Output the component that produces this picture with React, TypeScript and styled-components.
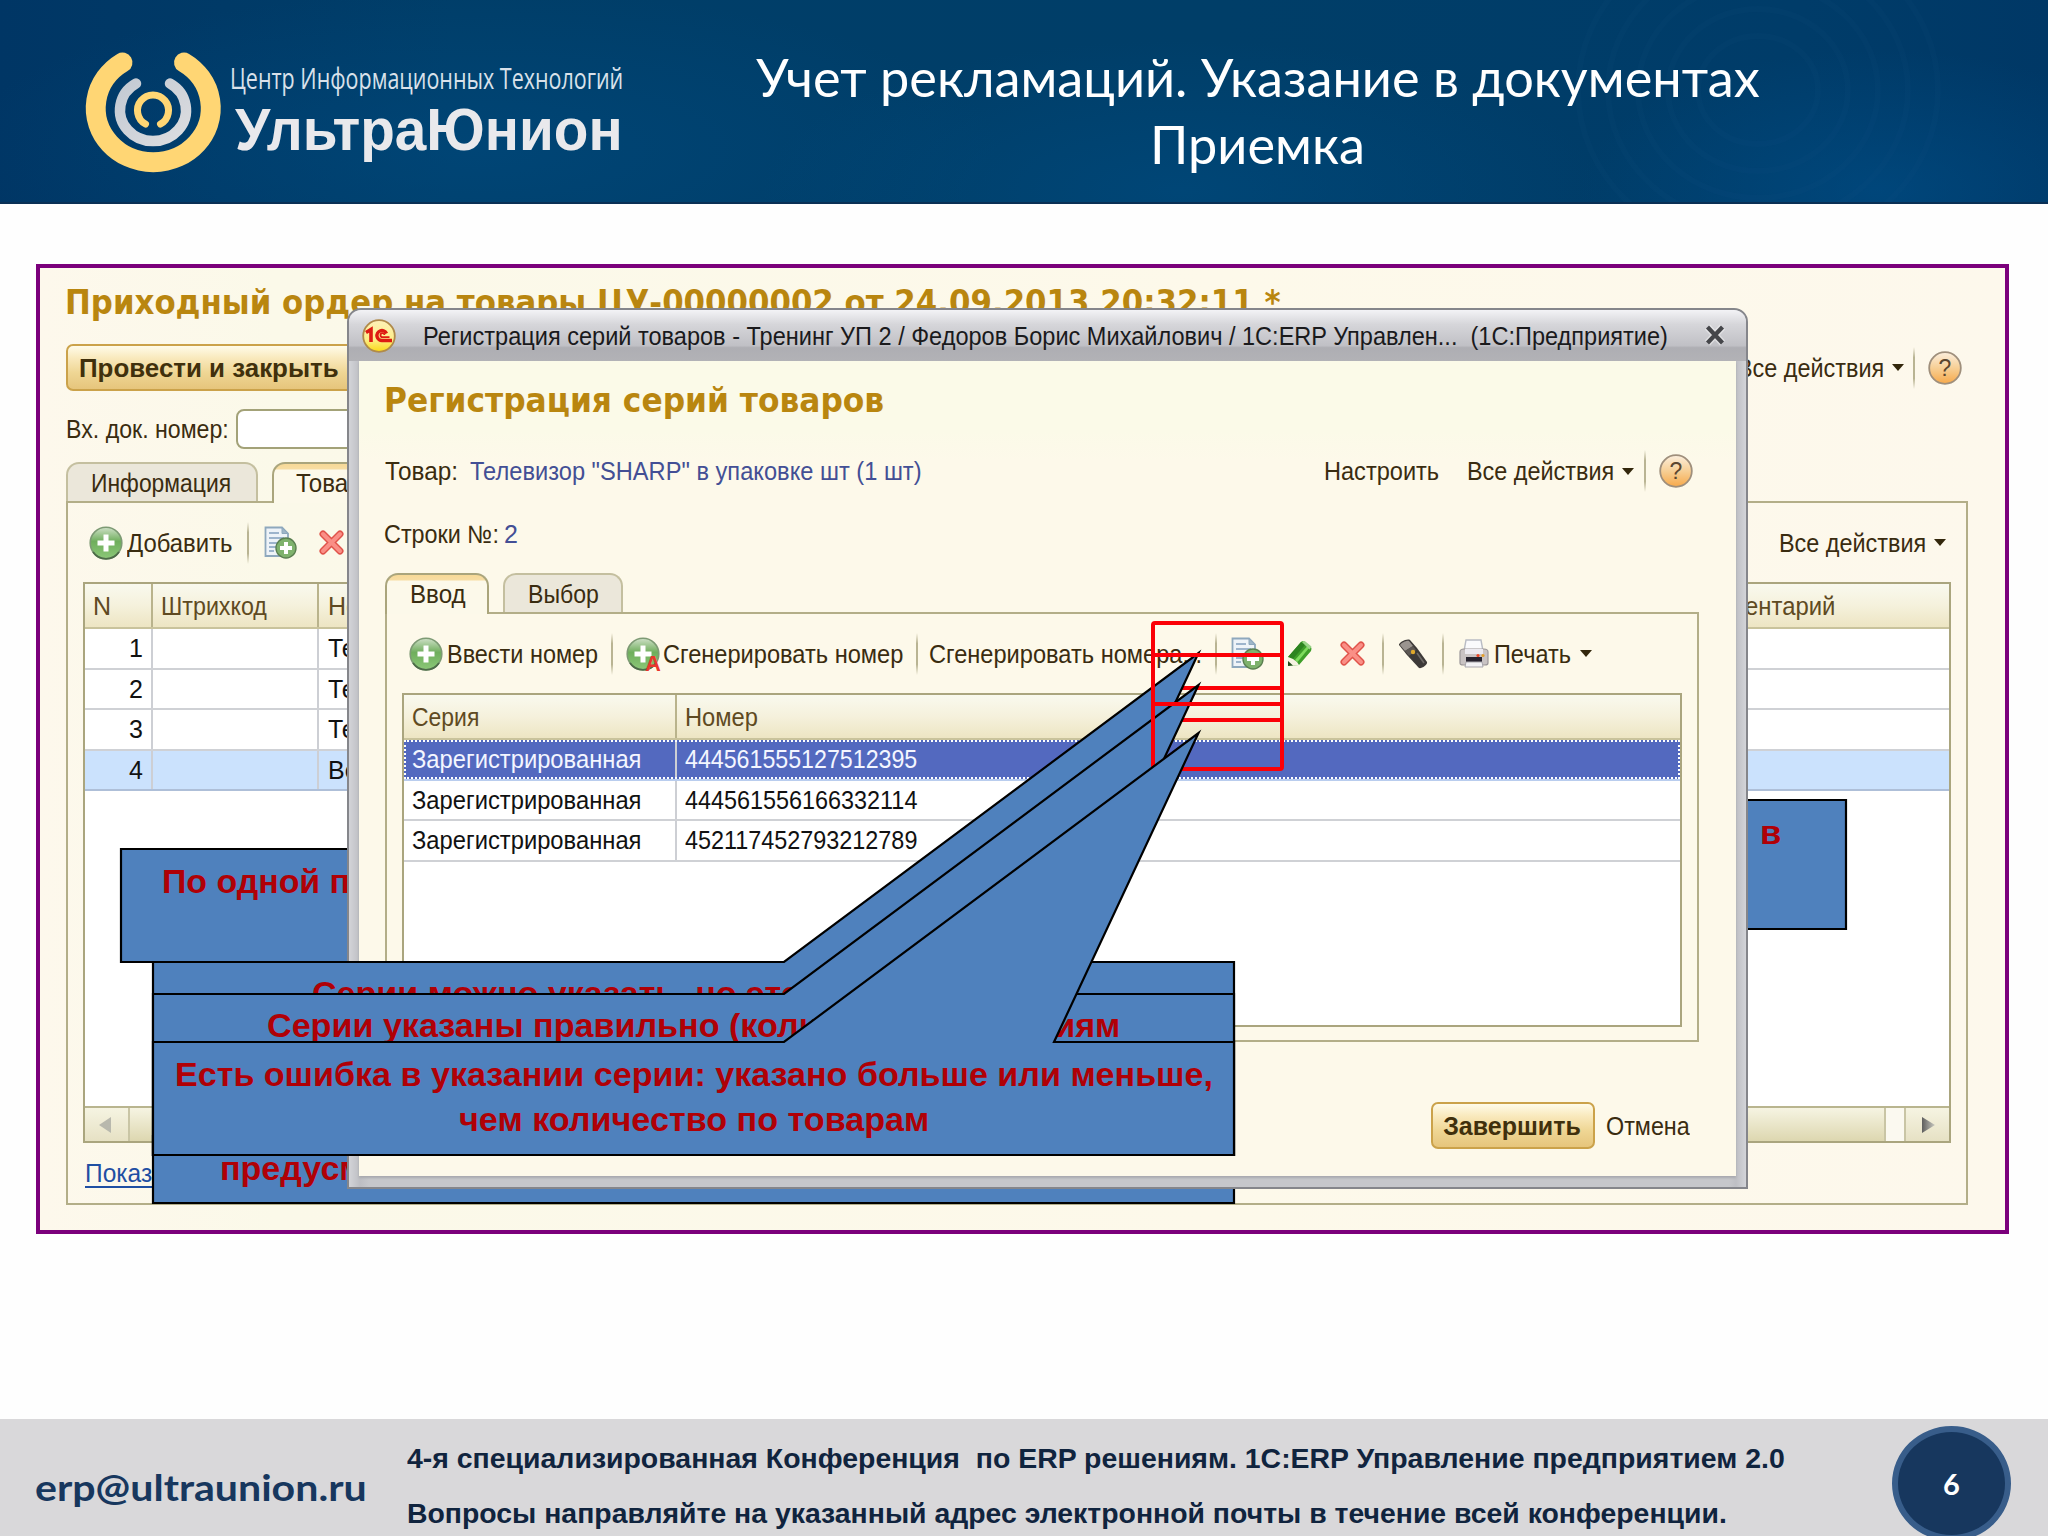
import React, { useLayoutEffect, useRef, useState } from "react";
import styled, { createGlobalStyle, css } from "styled-components";

const GlobalStyle = createGlobalStyle`
  *, *::before, *::after { box-sizing: border-box; }
  body { margin: 0; background: #fefefe; }
`;

const ui = `"Liberation Sans", Arial, sans-serif`;
const heading = `"DejaVu Sans", Verdana, sans-serif`;
const humanist = `Lato, "Open Sans", sans-serif`;

/* ---------- text that is condensed or widened to a given width ---------- */

type TextProps = {
  $size?: number;
  $color?: string;
  $bold?: boolean;
  $font?: string;
  $underline?: boolean;
};

const TextBox = styled.span<{ $ml?: number }>`
  display: block;
  flex: none;
  white-space: pre;
  margin-left: ${(p) => p.$ml ?? 0}px;
`;

const TextInk = styled.span<TextProps>`
  display: inline-block;
  vertical-align: top;
  transform-origin: left center;
  font-family: ${(p) => p.$font ?? ui};
  font-size: ${(p) => p.$size ?? 25}px;
  font-weight: ${(p) => (p.$bold ? 700 : 400)};
  line-height: 1.36;
  color: ${(p) => p.$color ?? "#3a2c10"};
  text-decoration: ${(p) => (p.$underline ? "underline" : "none")};
  text-decoration-thickness: 2px;
  text-underline-offset: 4px;
`;

function Label({ w, ml, children, ...ink }: TextProps & { w?: number; ml?: number; children: string }) {
  const ref = useRef<HTMLSpanElement>(null);
  const [scale, setScale] = useState(1);
  useLayoutEffect(() => {
    if (w && ref.current) setScale(w / ref.current.offsetWidth);
  }, [w, children]);
  return (
    <TextBox $ml={ml} style={w ? { width: w } : undefined}>
      <TextInk ref={ref} {...ink} style={w ? { transform: `scaleX(${scale})` } : undefined}>
        {children}
      </TextInk>
    </TextBox>
  );
}

/* ---------- slide ---------- */

const Slide = styled.div`
  position: relative;
  display: flex;
  flex-direction: column;
  width: 2048px;
  height: 1536px;
  overflow: hidden;
  background: #fefefe;
`;

const Header = styled.header`
  position: relative;
  display: flex;
  height: 204px;
  flex: none;
  border-bottom: 2px solid #0a3055;
  background:
    radial-gradient(ellipse 420px 150px at 1180px 190px, rgba(0, 82, 140, 0.4), transparent),
    radial-gradient(ellipse 520px 160px at 480px 150px, rgba(0, 76, 130, 0.5), transparent),
    radial-gradient(ellipse 300px 140px at 1880px 190px, rgba(0, 84, 145, 0.45), transparent),
    linear-gradient(90deg, #003665 0%, #003e69 22%, #003e68 60%, #003c69 88%, #003866 100%);
`;

const Ripples = styled.svg`
  position: absolute;
  right: 0;
  top: 0;
`;

const Logo = styled.div`
  display: flex;
  padding: 44px 0 0 80px;
  width: 700px;
`;

const LogoText = styled.div`
  display: flex;
  flex-direction: column;
  padding-left: 2px;
`;

const LogoTop = styled.div`
  height: 46px;
  padding-top: 14px;
`;

const LogoName = styled.div`
  margin-top: -1px;
`;

const SlideTitle = styled.div`
  display: flex;
  flex-direction: column;
  align-items: center;
  width: 1115px;
  padding-top: 41px;
`;

const TitleLine = styled.div`
  height: 67px;
`;

const Stage = styled.main`
  flex: 1;
  padding: 60px 39px 0 36px;
`;

const Frame = styled.section`
  isolation: isolate;
  height: 970px;
  border: 4px solid #7b007b;
  background: linear-gradient(90deg, #fdf8ec 0%, #fbf9e9 12%, #fdf9ea 60%, #fdf8ec 100%);
`;

const Row = styled.div<{ $h: number; $mt?: number; $pl?: number; $pr?: number; $end?: boolean }>`
  display: flex;
  align-items: center;
  justify-content: ${(p) => (p.$end ? "flex-end" : "flex-start")};
  height: ${(p) => p.$h}px;
  margin-top: ${(p) => p.$mt ?? 0}px;
  padding-left: ${(p) => p.$pl ?? 0}px;
  padding-right: ${(p) => p.$pr ?? 0}px;
`;

const Push = styled.div`
  flex: 1;
`;

const GoldButton = styled.button<{ $w: number; $pl: number }>`
  display: flex;
  align-items: center;
  flex: none;
  width: ${(p) => p.$w}px;
  height: 47px;
  padding: 0 0 0 ${(p) => p.$pl}px;
  border: 2px solid #cba24a;
  border-radius: 7px;
  background: linear-gradient(#fffbe9 0%, #f9e9bd 28%, #efd694 62%, #e6c57c 100%);
`;

const Field = styled.div`
  width: 300px;
  height: 40px;
  margin-left: 7px;
  border: 2px solid #a3a278;
  border-radius: 8px;
  background: #fff;
`;

const Divider = styled.i<{ $ml: number }>`
  flex: none;
  width: 2px;
  height: 42px;
  margin-left: ${(p) => p.$ml}px;
  background: linear-gradient(transparent, #b9b493 25%, #b9b493 75%, transparent);
`;

const Caret = styled.i<{ $ml: number }>`
  flex: none;
  margin-left: ${(p) => p.$ml}px;
  border: 6px solid transparent;
  border-top: 7px solid #33270c;
  border-bottom: 0;
`;

const Tabs = styled.div<{ $mt: number }>`
  display: flex;
  gap: 14px;
  height: 39px;
  margin-top: ${(p) => p.$mt}px;
  padding-left: 26px;
`;

const Tab = styled.div<{ $w: number; $active?: boolean; $pl: number }>`
  position: relative;
  display: flex;
  align-items: center;
  width: ${(p) => p.$w}px;
  height: 39px;
  padding: 1px 0 0 ${(p) => p.$pl}px;
  border: 2px solid #c4bf9f;
  border-bottom: 0;
  border-radius: 13px 13px 0 0;
  background: #ebe7da;
  ${(p) =>
    p.$active &&
    css`
      z-index: 1;
      height: 41px;
      padding-bottom: 2px;
      border-color: #aaa57c;
      background: linear-gradient(#f7d997 0, #f7dda3 5px, #fcf9ea 6px);
    `}
`;

const Panel = styled.div<{ $h: number; $mr: number }>`
  height: ${(p) => p.$h}px;
  margin: 0 ${(p) => p.$mr}px 0 26px;
  border: 2px solid #b3ae88;
`;

const Table = styled.div<{ $w: number; $h: number; $ml: number }>`
  display: flex;
  flex-direction: column;
  width: ${(p) => p.$w}px;
  height: ${(p) => p.$h}px;
  margin-left: ${(p) => p.$ml}px;
  border: 2px solid #aaa57e;
  background: #fff;
`;

const THead = styled.div<{ $h: number }>`
  display: flex;
  flex: none;
  height: ${(p) => p.$h}px;
  border-bottom: 2px solid #c9c39c;
  background: linear-gradient(#f9f9ee 0%, #f5f1dc 50%, #ede5c3 100%);
`;

const Cell = styled.div<{ $w?: number; $pl?: number; $head?: boolean; $right?: boolean }>`
  display: flex;
  align-items: center;
  justify-content: ${(p) => (p.$right ? "flex-end" : "flex-start")};
  flex: ${(p) => (p.$w ? "none" : "1")};
  width: ${(p) => (p.$w ? `${p.$w}px` : "auto")};
  padding-left: ${(p) => p.$pl ?? 8}px;
  padding-right: ${(p) => (p.$right ? 8 : 0)}px;
  border-right: ${(p) => (p.$w ? (p.$head ? "2px solid #b9b38c" : "2px solid #cdcfd4") : "0")};
`;

const TRow = styled.div<{ $h: number; $tone?: "soft" | "strong" }>`
  position: relative;
  display: flex;
  flex: none;
  height: ${(p) => p.$h}px;
  border-bottom: 2px solid #cfd1d5;
  ${(p) => p.$tone === "soft" && css`background: #cbe2fd; border-color: #aebfd8;`}
  ${(p) => p.$tone === "strong" && css`background: #5369bf; border-color: #b9cdee;`}
`;

const FocusRing = styled.i`
  position: absolute;
  inset: 0;
  border: 2px dotted #fff;
`;

const ScrollBar = styled.div`
  display: flex;
  flex: none;
  height: 35px;
  margin-top: auto;
  border-top: 2px solid #b9b58f;
  background: #fbf9f0;
`;

const ScrollPart = styled.div<{ $w: number; $tone?: boolean; $left?: boolean }>`
  display: flex;
  align-items: center;
  justify-content: center;
  width: ${(p) => p.$w}px;
  border-right: ${(p) => (p.$left ? 0 : 2)}px solid #c9c5a5;
  border-left: ${(p) => (p.$left ? 2 : 0)}px solid #c9c5a5;
  background: linear-gradient(#f6f4e2, ${(p) => (p.$tone ? "#ddd7b0" : "#e6e1c4")});
`;

/* ---------- dialog ---------- */

const Dialog = styled.section`
  position: absolute;
  left: 347px;
  top: 308px;
  display: flex;
  flex-direction: column;
  width: 1401px;
  height: 881px;
  padding: 0 10px 11px;
  border: 2px solid #85868b;
  border-radius: 14px 14px 0 0;
  background: linear-gradient(90deg, #d3d4d8 0, #bdbec3 11px, #c6c7cb 20px, #c6c7cb 1380px, #bebfc4 1387px, #d3d4d8 100%);
`;

const DialogBar = styled.div`
  display: flex;
  align-items: center;
  flex: none;
  height: 51px;
  margin: 0 -10px;
  padding: 1px 0 0 13px;
  border-radius: 12px 12px 0 0;
  background: linear-gradient(#f3f3f6 0%, #d6d6da 28%, #c0c0c5 70%, #aeaeb3 74%, #b2b2b6 100%);
`;

const DialogBody = styled.div`
  isolation: isolate;
  flex: 1;
  background: linear-gradient(#fbfae8 0%, #fbfae8 70px, #fdf9ea 100px, #fdf9ea 100%);
  box-shadow: 0 2px 2px #a9aaaf;
`;

/* ---------- callouts and markers lying over the windows ---------- */

const CalloutBox = styled.div<{ $x: number; $y: number; $w: number; $h: number }>`
  position: absolute;
  left: ${(p) => p.$x}px;
  top: ${(p) => p.$y}px;
  display: flex;
  flex-direction: column;
  align-items: center;
  width: ${(p) => p.$w}px;
  height: ${(p) => p.$h}px;
  padding-top: 10.6px;
`;

const CalloutShape = styled.svg`
  position: absolute;
  left: 0;
  top: 0;
  overflow: visible;
`;

const CalloutLine = styled.div<{ $start?: number }>`
  position: relative;
  height: 45px;
  ${(p) => p.$start !== undefined && css`align-self: flex-start; margin-left: ${p.$start}px;`}
`;

const Marker = styled.div<{ $y: number }>`
  position: absolute;
  left: 1151px;
  top: ${(p) => p.$y}px;
  width: 133px;
  height: 69px;
  border: 4px solid #fb0007;
  border-radius: 4px;
`;

type Line = { text: string; w: number; start?: number };

function Callout(p: { x: number; y: number; w: number; h: number; tail?: boolean; lines: Line[] }) {
  const top = p.tail ? `H631 L1045.5 -309 L901 0 H${p.w}` : `H${p.w}`;
  return (
    <CalloutBox $x={p.x} $y={p.y} $w={p.w} $h={p.h}>
      <CalloutShape width={p.w} height={p.h}>
        <path d={`M0 0 ${top} V${p.h} H0 Z`} fill="#4f81bd" stroke="#000" strokeWidth="2.2" strokeMiterlimit="8" />
      </CalloutShape>
      {p.lines.map((l) => (
        <CalloutLine key={l.text} $start={l.start}>
          <Label w={l.w} $size={33} $bold $color="#b00006">{l.text}</Label>
        </CalloutLine>
      ))}
    </CalloutBox>
  );
}

/* ---------- footer ---------- */

const Footer = styled.footer`
  display: flex;
  flex: none;
  height: 117px;
  background: #d9d8da;
`;

const Mail = styled.div`
  width: 407px;
  padding: 43px 0 0 35px;
`;

const Notes = styled.div`
  display: flex;
  flex-direction: column;
  gap: 17px;
  width: 1485px;
  padding-top: 21px;
`;

const PageNumber = styled.div`
  display: flex;
  align-items: center;
  justify-content: center;
  flex: none;
  width: 119px;
  height: 115px;
  margin-top: 7px;
  border: 6px solid #385d8a;
  border-radius: 50%;
  background: #17375e;
`;

/* ---------- icons ---------- */

const Icon = styled.svg<{ $ml?: number }>`
  flex: none;
  margin-left: ${(p) => p.$ml ?? 0}px;
  overflow: visible;
`;

const GradientDefs = styled.svg`
  position: absolute;
`;

const Gradients = () => (
  <GradientDefs width="0" height="0">
    <defs>
      <linearGradient id="green" x1="0" y1="0" x2="0" y2="1">
        <stop offset="0" stopColor="#cfe0c8" />
        <stop offset=".45" stopColor="#6fae5c" />
        <stop offset="1" stopColor="#8cc878" />
      </linearGradient>
      <linearGradient id="orange" x1="0" y1="0" x2="0" y2="1">
        <stop offset="0" stopColor="#fbeedd" />
        <stop offset=".5" stopColor="#f7cf95" />
        <stop offset="1" stopColor="#f7a94a" />
      </linearGradient>
      <linearGradient id="yellow" x1="0" y1="0" x2="0" y2="1">
        <stop offset="0" stopColor="#fdf0b8" />
        <stop offset=".6" stopColor="#fdee8a" />
        <stop offset="1" stopColor="#fbd913" />
      </linearGradient>
      <linearGradient id="silver" x1="0" y1="0" x2="1" y2="1">
        <stop offset="0" stopColor="#c3cad3" />
        <stop offset="1" stopColor="#dcdde0" />
      </linearGradient>
      <linearGradient id="arrow" x1="0" y1="0" x2="1" y2="0">
        <stop offset="0" stopColor="#5e5e5e" />
        <stop offset="1" stopColor="#c9c9c0" />
      </linearGradient>
    </defs>
  </GradientDefs>
);

const PlusIcon = ({ ml, auto }: { ml?: number; auto?: boolean }) => (
  <Icon $ml={ml} width="34" height="34" viewBox="0 0 34 34">
    <circle cx="17" cy="17" r="15.8" fill="url(#green)" stroke="#7d9a74" strokeWidth="1.6" />
    <path d="M4 25a15.8 15.8 0 0 0 26 0" fill="none" stroke="#4c6b47" strokeWidth="1.8" transform="translate(0 1)" />
    <path d="M17 8.500v17M8.500 17h17" stroke="#fff" strokeWidth="5" />
    {auto && (
      <text x="19" y="34" fontFamily={ui} fontSize="22" fontWeight="700" fill="#e8372c">A</text>
    )}
  </Icon>
);

const DocIcon = ({ ml }: { ml: number }) => (
  <Icon $ml={ml} width="33" height="33" viewBox="0 0 33 33">
    <path d="M1.500 1.500H18l6 6v22.500H1.500z" fill="#eef3f8" stroke="#8ea8bd" strokeWidth="1.8" />
    <path d="M18 1.500v6h6z" fill="#9fb6c8" stroke="#8ea8bd" />
    <path d="M5 7h10M5 12h15M5 17h9M5 21h7M5 25h5" stroke="#9db4cc" strokeWidth="1.8" />
    <circle cx="22" cy="22" r="10" fill="#7fb26d" stroke="#5a7f50" strokeWidth="1.4" />
    <path d="M22 16v12M16 22h12" stroke="#fff" strokeWidth="4" />
  </Icon>
);

const CrossIcon = ({ ml }: { ml: number }) => (
  <Icon $ml={ml} width="25" height="25" viewBox="0 0 25 25">
    <path d="M4 4l17 17M21 4L4 21" stroke="#e0544b" strokeWidth="7" strokeLinecap="round" />
    <path d="M4 4l17 17M21 4L4 21" stroke="#fa8f86" strokeWidth="4" strokeLinecap="round" />
  </Icon>
);

const PencilIcon = ({ ml }: { ml: number }) => (
  <Icon $ml={ml} width="26" height="27" viewBox="0 0 26 27">
    <path d="M1 17L14 2q2-2 4 0l6 5q1 1.500 0 4L12 25l-11 1z" fill="#3f9f2a" />
    <path d="M1 17L14 2l4 3L6 19z" fill="#2d8420" />
    <path d="M8 20L20 6.500l2 1.500L10.500 22z" fill="#7fdc5e" />
    <path d="M15 2q2-2 4 0l5.500 4.500-2 3z" fill="#9bd58a" />
    <path d="M1 17l5 2 4 3 2 3-11 1z" fill="#f7f3e2" />
    <path d="M1 26v-5l5 4.500z" fill="#234d1c" />
  </Icon>
);

const ScannerIcon = ({ ml }: { ml: number }) => (
  <Icon $ml={ml} width="30" height="30" viewBox="0 0 30 30">
    <path d="M1 6c-1-2 8-7 11-5l7 8 10 14c1 3-6 7-8 6L9 16z" fill="#3d3a38" />
    <path d="M2 6c1-2 7-5 9-4l4 5-8 5z" fill="#9a948f" />
    <path d="M7 12l8-5 3 4-7 6z" fill="#5d5854" />
    <circle cx="15" cy="13" r="2.200" fill="#e0a92c" />
    <path d="M19 14l7 10" stroke="#6e6a67" strokeWidth="1.600" />
  </Icon>
);

const PrinterIcon = ({ ml }: { ml: number }) => (
  <Icon $ml={ml} width="30" height="29" viewBox="0 0 30 29">
    <path d="M7 1h15l2 11H5z" fill="#fafafc" stroke="#b9bcc4" strokeWidth="1.400" />
    <path d="M1 13q0-3 4-3h20q4 0 4 3v11q0 2-3 2H4q-3 0-3-2z" fill="#c9c3c3" stroke="#9b9698" strokeWidth="1.200" />
    <path d="M6 10h18v5H6z" fill="#eceaf0" />
    <circle cx="19" cy="16.500" r="1.600" fill="#ee4423" />
    <circle cx="24" cy="16.500" r="1.600" fill="#e6a02c" />
    <path d="M7 18h16v5H7z" fill="#26222e" />
    <path d="M7 23h16l1 5H6z" fill="#f3f2f5" stroke="#a9a7ad" />
  </Icon>
);

const HelpIcon = ({ ml }: { ml: number }) => (
  <Icon $ml={ml} width="34" height="34" viewBox="0 0 34 34">
    <circle cx="17" cy="17" r="15.800" fill="url(#orange)" stroke="#9f8f7c" strokeWidth="1.800" />
    <text x="17" y="25" textAnchor="middle" fontFamily={ui} fontSize="23" fill="#5b4630">?</text>
  </Icon>
);

const BrandIcon = () => (
  <Icon width="34" height="34" viewBox="0 0 34 34">
    <circle cx="17" cy="17" r="15.800" fill="url(#yellow)" stroke="#b08a4a" strokeWidth="1.800" />
    <path d="M4 13.500l5-3V23" fill="none" stroke="#de1a12" strokeWidth="3.600" />
    <path d="M24.500 14.500a5 5 0 1 0-4 7H30" fill="none" stroke="#de1a12" strokeWidth="3.400" />
    <path d="M22.500 16a2 2 0 1 0-2 2.200h7" fill="none" stroke="#de1a12" strokeWidth="1.800" />
  </Icon>
);

const CloseIcon = () => (
  <Icon $ml={37} width="20" height="20" viewBox="0 0 20 20">
    <path d="M2.500 1l15 16M17.500 1l-15 16" stroke="#fafafa" strokeWidth="7" opacity=".5" />
    <path d="M2.500 1l15 16M17.500 1l-15 16" stroke="#45464a" strokeWidth="4.200" />
  </Icon>
);

const LogoMark = () => (
  <svg width="148" height="136" viewBox="80 44 148 136" fill="none" strokeLinecap="round">
    <path d="M122.500 62.500A57.500 54 0 1 0 184 62.500" stroke="#ffd674" strokeWidth="20" />
    <path d="M136 83.500A33 31 0 1 0 170 83.500" stroke="url(#silver)" strokeWidth="10.500" />
    <path d="M145.500 124A15.500 15.500 0 1 1 160.500 124" stroke="#ffd674" strokeWidth="7" />
  </svg>
);

/* ---------- data ---------- */

const goods = [
  { n: "1", name: "Телевизор" },
  { n: "2", name: "Телевизор" },
  { n: "3", name: "Телевизор" },
  { n: "4", name: "Вентилятор" },
];

const series = ["444561555127512395", "444561556166332114", "452117452793212789"];

const brown = "#5f4a22";

/* ---------- windows ---------- */

function OrderWindow() {
  return (
    <Frame>
      <Row $h={70} $pl={25}>
        <Label w={1216} $font={heading} $bold $size={33} $color="#b9860f">
          Приходный ордер на товары ЦУ-00000002 от 24.09.2013 20:32:11 *
        </Label>
      </Row>
      <Row $h={47} $mt={6} $pl={26} $pr={43}>
        <GoldButton $w={330} $pl={10}>
          <Label ml={-4} w={260} $bold $color="#40300c">Провести и закрыть</Label>
        </GoldButton>
        <Push />
        <Label w={147}>Все действия</Label>
        <Caret $ml={8} />
        <Divider $ml={9} />
        <HelpIcon ml={13} />
      </Row>
      <Row $h={40} $mt={18} $pl={26}>
        <Label w={163}>Вх. док. номер:</Label>
        <Field />
      </Row>
      <Tabs $mt={13}>
        <Tab $w={192} $pl={23}>
          <Label w={140}>Информация</Label>
        </Tab>
        <Tab $w={130} $active $pl={22}>
          <Label w={83}>Товары</Label>
        </Tab>
      </Tabs>
      <Panel $h={704} $mr={37}>
        <Row $h={79} $pl={21} $pr={20}>
          <PlusIcon />
          <Label ml={4} w={106}>Добавить</Label>
          <Divider $ml={14} />
          <DocIcon ml={15} />
          <CrossIcon ml={22} />
          <Push />
          <Label w={147}>Все действия</Label>
          <Caret $ml={8} />
        </Row>
        <Table $w={1868} $h={561} $ml={15}>
          <THead $h={45}>
            <Cell $head $w={68} $pl={8}><Label $color={brown} w={18}>N</Label></Cell>
            <Cell $head $w={166} $pl={8}><Label $color={brown} w={106}>Штрихкод</Label></Cell>
            <Cell $head $w={1358} $pl={9}><Label $color={brown}>Номенклатура</Label></Cell>
            <Cell $head $pl={8}><Label $color={brown} w={150}>Комментарий</Label></Cell>
          </THead>
          {goods.map((g) => (
            <TRow key={g.n} $h={40.5} $tone={g.n === "4" ? "soft" : undefined}>
              <Cell $w={68} $right><Label $color="#111">{g.n}</Label></Cell>
              <Cell $w={166} />
              <Cell $pl={9}><Label $color="#111">{g.name}</Label></Cell>
            </TRow>
          ))}
          <ScrollBar>
            <ScrollPart $w={45}>
              <svg width="17" height="18"><path d="M13 1v16L1 9z" fill="#b8b8ad" /></svg>
            </ScrollPart>
            <ScrollPart $w={1756} $tone />
            <Push />
            <ScrollPart $w={45} $left>
              <svg width="14" height="18" overflow="visible"><path d="M1 1v16l13-8z" fill="url(#arrow)" /></svg>
            </ScrollPart>
          </ScrollBar>
        </Table>
        <Row $h={59} $pl={17}>
          <Label w={104} $underline $color="#1f4fa3">Показать</Label>
        </Row>
      </Panel>
    </Frame>
  );
}

function SeriesDialog() {
  return (
    <Dialog>
      <DialogBar>
        <BrandIcon />
        <Label ml={27} w={1245} $color="#1a1a1c">
          {"Регистрация серий товаров - Тренинг УП 2 / Федоров Борис Михайлович / 1С:ERP Управлен...  (1С:Предприятие)"}
        </Label>
        <CloseIcon />
      </DialogBar>
      <DialogBody>
        <Row $h={80} $pl={25}>
          <Label w={500} $font={heading} $bold $size={33} $color="#b9860f">Регистрация серий товаров</Label>
        </Row>
        <Row $h={60} $pl={26} $pr={43}>
          <Label w={73}>Товар:</Label>
          <Label ml={12} w={452} $color="#434f95">Телевизор "SHARP" в упаковке шт (1 шт)</Label>
          <Push />
          <Label w={115}>Настроить</Label>
          <Label ml={28} w={147}>Все действия</Label>
          <Caret $ml={8} />
          <Divider $ml={10} />
          <HelpIcon ml={13} />
        </Row>
        <Row $h={66} $pl={25}>
          <Label w={115}>Строки №:</Label>
          <Label ml={5} $color="#434f95">2</Label>
        </Row>
        <Tabs $mt={6}>
          <Tab $w={104} $active $pl={23}><Label w={56}>Ввод</Label></Tab>
          <Tab $w={120} $pl={23}><Label w={71}>Выбор</Label></Tab>
        </Tabs>
        <Panel $h={430} $mr={37}>
          <Row $h={79} $pl={22}>
            <PlusIcon />
            <Label ml={4} w={151}>Ввести номер</Label>
            <Divider $ml={13} />
            <PlusIcon ml={13} auto />
            <Label ml={3} w={240}>Сгенерировать номер</Label>
            <Divider $ml={13} />
            <Label ml={11} w={273}>Сгенерировать номера...</Label>
            <Divider $ml={13} />
            <DocIcon ml={14} />
            <PencilIcon ml={23} />
            <CrossIcon ml={27} />
            <Divider $ml={17} />
            <ScannerIcon ml={14} />
            <Divider $ml={14} />
            <PrinterIcon ml={15} />
            <Label ml={5} w={77}>Печать</Label>
            <Caret $ml={9} />
          </Row>
          <Table $w={1280} $h={334} $ml={15}>
            <THead $h={45}>
              <Cell $head $w={273} $pl={8}><Label $color={brown} w={67}>Серия</Label></Cell>
              <Cell $pl={8}><Label $color={brown} w={73}>Номер</Label></Cell>
            </THead>
            {series.map((s, i) => (
              <TRow key={s} $h={40.5} $tone={i === 0 ? "strong" : undefined}>
                {i === 0 && <FocusRing />}
                <Cell $w={273} $pl={8}>
                  <Label w={229} $color={i === 0 ? "#f4f6ff" : "#111"}>Зарегистрированная</Label>
                </Cell>
                <Cell $pl={8}>
                  <Label w={232} $color={i === 0 ? "#f4f6ff" : "#111"}>{s}</Label>
                </Cell>
              </TRow>
            ))}
          </Table>
        </Panel>
        <Row $h={47} $mt={60} $pr={46} $end>
          <GoldButton $w={164} $pl={10}>
            <Label w={138} $bold $color="#40300c">Завершить</Label>
          </GoldButton>
          <Label ml={11} w={84}>Отмена</Label>
        </Row>
      </DialogBody>
    </Dialog>
  );
}

export default function App() {
  return (
    <>
      <GlobalStyle />
      <Gradients />
      <Slide>
        <Header>
          <Ripples width="700" height="202" viewBox="0 0 700 202" fill="none" stroke="#1a5a8c" strokeOpacity=".08" strokeWidth="6">
            {[60, 90, 120, 150, 180].map((r) => (
              <ellipse key={r} cx="410" cy="90" rx={r} ry={r * 0.9} />
            ))}
          </Ripples>
          <Logo>
            <LogoMark />
            <LogoText>
              <LogoTop><Label w={393} $font={`"Open Sans", "Noto Sans", sans-serif`} $size={30} $color="#d9e1ea">Центр Информационных Технологий</Label></LogoTop>
              <LogoName><Label ml={5} w={388} $bold $size={60} $color="#e9e9ec">УльтраЮнион</Label></LogoName>
            </LogoText>
          </Logo>
          <SlideTitle>
            <TitleLine><Label w={1004} $font={humanist} $size={53} $color="#fff">Учет рекламаций. Указание в документах</Label></TitleLine>
            <TitleLine><Label w={215} $font={humanist} $size={53} $color="#fff">Приемка</Label></TitleLine>
          </SlideTitle>
        </Header>
        <Stage>
          <OrderWindow />
        </Stage>
        <Footer>
          <Mail><Label w={332} $font={humanist} $bold $size={37} $color="#17375e">erp@ultraunion.ru</Label></Mail>
          <Notes>
            <Label w={1378} $bold $size={28} $color="#10243e">{"4-я специализированная Конференция  по ERP решениям. 1С:ERP Управление предприятием 2.0"}</Label>
            <Label w={1320} $bold $size={28} $color="#10243e">Вопросы направляйте на указанный адрес электронной почты в течение всей конференции.</Label>
          </Notes>
          <PageNumber><Label $font={humanist} $bold $size={29} $color="#fff">6</Label></PageNumber>
        </Footer>

        <Callout x={121} y={849} w={700} h={113} lines={[{ text: "По одной позиции", w: 308, start: 41 }]} />
        <Callout x={1300} y={800} w={546} h={129} lines={[{ text: "в", w: 21, start: 460 }]} />
        <Callout x={153} y={1136} w={1081} h={67} lines={[{ text: "предусмотрено", w: 262, start: 67 }]} />
        <SeriesDialog />
        <Marker $y={621} />
        <Callout x={153} y={961.5} w={1081} h={193} tail lines={[{ text: "Серии можно указать, но это не обязательно", w: 764 }]} />
        <Marker $y={653} />
        <Callout x={153} y={993.5} w={1081} h={161} tail lines={[{ text: "Серии указаны правильно (количество по сериям", w: 853 }]} />
        <Marker $y={702} />
        <Callout
          x={153}
          y={1042}
          w={1081}
          h={113}
          tail
          lines={[
            { text: "Есть ошибка в указании серии: указано больше или меньше,", w: 1038 },
            { text: "чем количество по товарам", w: 470 },
          ]}
        />
      </Slide>
    </>
  );
}
